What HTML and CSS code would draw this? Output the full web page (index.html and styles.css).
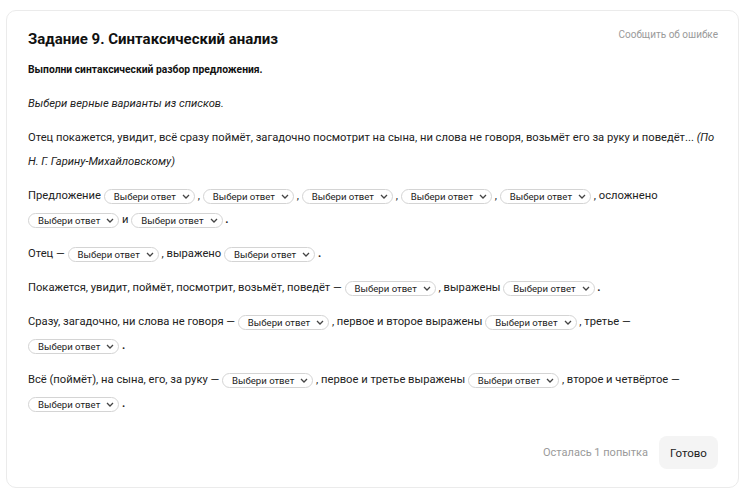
FILE: index.html
```html
<!DOCTYPE html>
<html lang="ru">
<head>
<meta charset="utf-8">
<link rel="stylesheet" href="styles.css">
</head>
<body>
<div class="card">
  <div class="head">
    <h1 class="title">Задание 9. Синтаксический анализ</h1>
    <span class="report">Сообщить об ошибке</span>
  </div>
  <p class="sub">Выполни синтаксический разбор предложения.</p>
  <p class="hint">Выбери верные варианты из списков.</p>
  <p class="text">Отец покажется, увидит, всё сразу поймёт, загадочно посмотрит на сына, ни слова не говоря, возьмёт его за руку и поведёт... <i>(По Н. Г. Гарину-Михайловскому)</i></p>
  <p class="text">Предложение <span class="sel">Выбери ответ<svg viewBox="0 0 8 5"><path d="M1 1l3 3 3-3"/></svg></span> , <span class="sel">Выбери ответ<svg viewBox="0 0 8 5"><path d="M1 1l3 3 3-3"/></svg></span> , <span class="sel">Выбери ответ<svg viewBox="0 0 8 5"><path d="M1 1l3 3 3-3"/></svg></span> , <span class="sel">Выбери ответ<svg viewBox="0 0 8 5"><path d="M1 1l3 3 3-3"/></svg></span> , <span class="sel">Выбери ответ<svg viewBox="0 0 8 5"><path d="M1 1l3 3 3-3"/></svg></span> , осложнено <span class="sel">Выбери ответ<svg viewBox="0 0 8 5"><path d="M1 1l3 3 3-3"/></svg></span> и <span class="sel">Выбери ответ<svg viewBox="0 0 8 5"><path d="M1 1l3 3 3-3"/></svg></span> <b>.</b></p>
  <p class="text">Отец — <span class="sel">Выбери ответ<svg viewBox="0 0 8 5"><path d="M1 1l3 3 3-3"/></svg></span> , выражено <span class="sel">Выбери ответ<svg viewBox="0 0 8 5"><path d="M1 1l3 3 3-3"/></svg></span> <b>.</b></p>
  <p class="text">Покажется, увидит, поймёт, посмотрит, возьмёт, поведёт — <span class="sel">Выбери ответ<svg viewBox="0 0 8 5"><path d="M1 1l3 3 3-3"/></svg></span> , выражены <span class="sel">Выбери ответ<svg viewBox="0 0 8 5"><path d="M1 1l3 3 3-3"/></svg></span> <b>.</b></p>
  <p class="text">Сразу, загадочно, ни слова не говоря — <span class="sel">Выбери ответ<svg viewBox="0 0 8 5"><path d="M1 1l3 3 3-3"/></svg></span> , первое и второе выражены <span class="sel">Выбери ответ<svg viewBox="0 0 8 5"><path d="M1 1l3 3 3-3"/></svg></span> , третье — <span class="sel">Выбери ответ<svg viewBox="0 0 8 5"><path d="M1 1l3 3 3-3"/></svg></span> <b>.</b></p>
  <p class="text">Всё (поймёт), на сына, его, за руку — <span class="sel">Выбери ответ<svg viewBox="0 0 8 5"><path d="M1 1l3 3 3-3"/></svg></span> , первое и третье выражены <span class="sel">Выбери ответ<svg viewBox="0 0 8 5"><path d="M1 1l3 3 3-3"/></svg></span> , второе и четвёртое — <span class="sel">Выбери ответ<svg viewBox="0 0 8 5"><path d="M1 1l3 3 3-3"/></svg></span> <b>.</b></p>
  <div class="foot">
    <span class="left">Осталась 1 попытка</span>
    <button class="done">Готово</button>
  </div>
</div>
</body>
</html>
```
FILE: styles.css
```css
html, body { margin: 0; padding: 0; background: #fff; }
body { font-family: Roboto, "Noto Sans", sans-serif; color: #222; }
.card {
  position: relative;
  margin: 10px 0 0 6px;
  width: 690px;
  padding: 18px 20px 18px 21px;
  border: 1px solid #ebebeb;
  border-radius: 10px;
  background: #fff;
}
.card::after {
  content: "";
  position: absolute;
  left: 6px; right: 6px; bottom: -5px; height: 10px;
  border: 1px solid #ebebeb;
  border-top: none;
  border-radius: 0 0 10px 10px;
  z-index: -1;
}
.head { display: flex; justify-content: space-between; align-items: flex-start; }
.title { margin: 0; font-size: 15px; line-height: 20px; font-weight: 700; color: #111; }
.report { font-size: 10px; line-height: 14px; color: #9a9a9a; margin-top: -1px; }
p { margin: 10px 0 0; font-size: 11.2px; line-height: 24px; }
.sub { margin-top: 9px; font-weight: 700; font-size: 10.3px; color: #111; }
.hint { font-style: italic; }
.sel {
  display: inline-flex;
  align-items: center;
  height: 15px;
  box-sizing: border-box;
  padding: 0 4px 0 9px;
  border: 1px solid #d4d4d4;
  border-radius: 8px;
  font-size: 9.6px;
  line-height: 13px;
  vertical-align: middle;
  color: #222;
}
.sel svg { width: 8px; height: 5px; margin-left: 6px; fill: none; stroke: #444; stroke-width: 1.3; }
.foot { display: flex; justify-content: flex-end; align-items: center; margin-top: 20px; }
.left { font-size: 11px; color: #9a9a9a; margin-right: 11px; }
.done {
  font-family: inherit; font-size: 11.5px; color: #222;
  width: 59px; height: 33px; border: none; border-radius: 8px; background: #f4f4f4;
}
```
